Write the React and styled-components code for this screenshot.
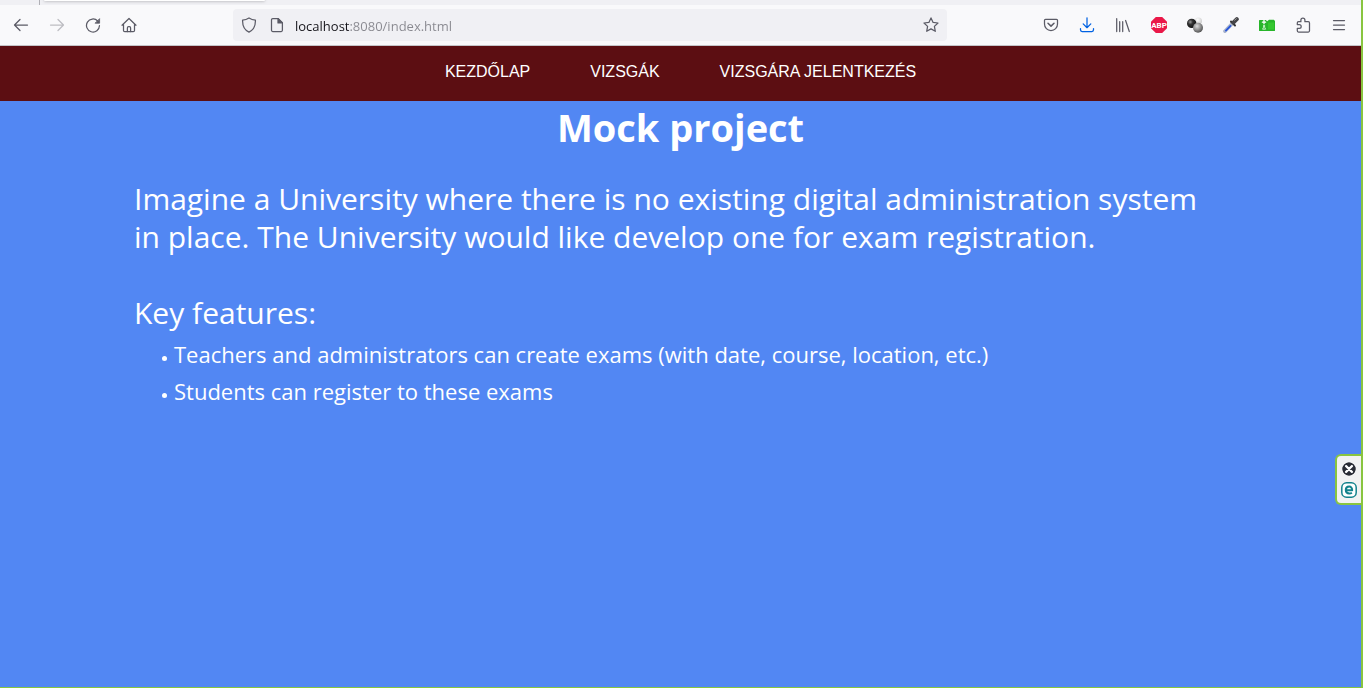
import React from "react";
import styled, { createGlobalStyle } from "styled-components";

const GlobalStyle = createGlobalStyle`
  *, *::before, *::after { box-sizing: border-box; }
  html, body { margin: 0; padding: 0; }
  body { background: #5287f3; }
`;

const uiFont = `"Segoe UI", "Open Sans", "Noto Sans", sans-serif`;

const Window = styled.div`
  position: relative;
  display: flex;
  flex-direction: column;
  min-height: 100vh;
  border-right: 2px solid #89c540;
  border-bottom: 1px solid #89c540;
  background: #5287f3;
  color: #ffffff;
  font-family: ${uiFont};
`;

const TabStrip = styled.div`
  display: flex;
  gap: 4px;
  height: 5px;
  padding-left: 39px;
  overflow: hidden;
  background: #f0f0f4;
`;

const TabSeparator = styled.span`
  width: 1px;
  background: #b0b0b6;
`;

const ActiveTab = styled.div`
  width: 221px;
  height: 1px;
  border-radius: 0 0 4px 4px;
  background: #ffffff;
  box-shadow: 0 0 3px rgba(0, 0, 0, 0.55);
`;

const Toolbar = styled.div`
  display: flex;
  align-items: center;
  height: 41px;
  padding: 0 6px 0 5px;
  background: #f9f9fb;
  border-bottom: 1px solid #c4c4c8;
`;

const ButtonGroup = styled.div`
  display: flex;
  gap: 4px;
`;

const IconButton = styled.button`
  display: flex;
  align-items: center;
  justify-content: center;
  width: ${(p) => (p.$narrow ? 28 : 32)}px;
  height: 32px;
  padding: 0;
  border: 0;
  border-radius: 4px;
  background: none;
  color: ${(p) => p.$color || "#5b5b66"};
`;

const AddressBar = styled.form`
  display: flex;
  flex: 1;
  align-items: center;
  min-width: 0;
  height: 32px;
  margin: 0 88px;
  padding: 0 2px;
  border-radius: 4px;
  background: #f0f0f4;
`;

const AddressInput = styled.input`
  flex: 1;
  min-width: 0;
  height: 32px;
  margin-left: 4px;
  padding: 2px 0 0;
  border: 0;
  outline: 0;
  background: linear-gradient(to right, #15141a 55px, #88888f 55px);
  -webkit-background-clip: text;
  background-clip: text;
  color: transparent;
  font-family: ${uiFont};
  font-size: 13px;
`;

const SiteNav = styled.nav`
  display: flex;
  justify-content: center;
  gap: 60px;
  height: 55px;
  padding-top: 16px;
  background: #5c0e12;
`;

const NavLink = styled.a`
  color: #ffffff;
  font-family: "Liberation Sans", Arial, sans-serif;
  font-size: 16px;
  line-height: 19px;
  text-decoration: none;
`;

const Content = styled.main`
  flex: 1;
  padding: 0 134px;
`;

const Title = styled.h1`
  margin: 0;
  font-size: 38px;
  line-height: 52px;
  text-align: center;
`;

const Intro = styled.p`
  margin: 27px 0 38px;
  padding-right: 8px;
  font-size: 30px;
  line-height: 38px;
`;

const SectionTitle = styled.h2`
  margin: 0;
  font-size: 30px;
  font-weight: 400;
  line-height: 38px;
`;

const FeatureList = styled.ul`
  margin: 4px 0 0;
  padding: 0 0 0 40px;
  list-style: none;
`;

const Feature = styled.li`
  display: flex;
  align-items: center;
  gap: 7px;
  margin-left: -12px;
  font-size: 22px;
  line-height: 37px;

  &::before {
    content: "";
    width: 5px;
    height: 5px;
    margin-top: 8px;
    border-radius: 50%;
    background: #ffffff;
  }
`;

const SidePanel = styled.aside`
  position: absolute;
  top: 454px;
  right: 0;
  display: flex;
  flex-direction: column;
  align-items: center;
  gap: 4px;
  width: 26px;
  padding: 5px 0 4px;
  border: 2px solid #89c540;
  border-right: 0;
  border-radius: 6px 0 0 6px;
  background: #f2f2f2;
`;

const PanelButton = styled.button`
  display: flex;
  width: 16px;
  height: 17px;
  padding: 0;
  border: 0;
  background: none;
`;

function Icon({ children, size = 16 }) {
  return (
    <svg
      width={size}
      height={size}
      viewBox="0 0 16 16"
      fill="none"
      stroke="currentColor"
      strokeWidth="1.25"
      strokeLinecap="round"
      strokeLinejoin="round"
      aria-hidden="true"
    >
      {children}
    </svg>
  );
}

const BackIcon = () => (
  <Icon><path d="M14.5 8H1.7M7 2.5 1.5 8 7 13.5" /></Icon>
);
const ForwardIcon = () => (
  <Icon><path d="M1.5 8h12.8M9 2.5 14.5 8 9 13.5" /></Icon>
);
const ReloadIcon = () => (
  <Icon>
    <path d="M12.7 4A6.5 6.5 0 1 0 14.5 8.6" />
    <path d="M14.6 2v4.2h-4.2z" fill="currentColor" strokeWidth="0.8" />
  </Icon>
);
const HomeIcon = () => (
  <Icon>
    <path d="M1 8.2 8 1.5l7 6.7M2.5 7v6.5c0 .7.5 1.2 1.2 1.2h8.6c.7 0 1.2-.5 1.2-1.2V7" />
    <path d="M6.4 14.5V11c0-.8.5-1.3 1.1-1.3h1c.6 0 1.1.5 1.1 1.3v3.5" />
  </Icon>
);
const ShieldIcon = () => (
  <Icon><path d="M8 .9c2 1.3 4.2 2 6.4 2.2.2 4.8-.8 9.4-6.4 12-5.6-2.6-6.6-7.2-6.4-12C3.8 2.9 6 2.2 8 .9z" /></Icon>
);
const PageIcon = () => (
  <Icon>
    <path d="M3.7 1.6h5.6l4.1 4.1v7.6c0 .7-.5 1.2-1.2 1.2H3.7c-.7 0-1.2-.5-1.2-1.2V2.8c0-.7.5-1.2 1.2-1.2z" />
    <path d="M9 1.6v4.3h4.3z" fill="currentColor" />
  </Icon>
);
const StarIcon = () => (
  <Icon><path d="m8 .9 2.1 4.5 4.9.6-3.6 3.4.9 4.9L8 11.9l-4.300 2.400.9-4.900L1 6l4.900-.6z" /></Icon>
);
const PocketIcon = () => (
  <Icon>
    <path d="M2.500 2.300h11c.6 0 1 .4 1 1V7c0 3.700-2.800 6.500-6.500 6.500S1.500 10.700 1.500 7V3.300c0-.6.4-1 1-1z" />
    <path d="m5 6.200 3 2.900 3-2.900" strokeWidth="1.5" />
  </Icon>
);
const DownloadIcon = () => (
  <Icon><path d="M8 .8v9.700M4.200 6.900 8 10.700l3.800-3.800M1.500 11.600v1.200c0 1 .6 1.700 1.600 1.700h9.800c1 0 1.600-.7 1.600-1.700v-1.200" /></Icon>
);
const LibraryIcon = () => (
  <Icon><path d="M1.700 1.700v12.800M4.700 4.700v9.800M7.700 4.700v9.800M10.600 3.500l3.700 11" /></Icon>
);
const BlockerIcon = () => (
  <Icon>
    <path d="M4.800 0h6.400L16 4.700v6.600L11.200 16H4.800L0 11.300V4.700z" fill="#ea1848" stroke="none" />
    <text x="8" y="10.800" fill="#fff" stroke="none" fontSize="8" fontWeight="700" fontFamily="Roboto, sans-serif" textAnchor="middle">ABP</text>
  </Icon>
);
const SpheresIcon = () => (
  <Icon>
    <defs>
      <radialGradient id="sphereDark" cx=".35" cy=".35" r=".65">
        <stop offset="0" stopColor="#999" /><stop offset=".4" stopColor="#333" /><stop offset="1" stopColor="#111" />
      </radialGradient>
      <radialGradient id="sphereGrey" cx=".4" cy=".35" r=".65">
        <stop offset="0" stopColor="#ddd" /><stop offset="1" stopColor="#555" />
      </radialGradient>
      <radialGradient id="sphereLight" cx=".4" cy=".35" r=".65">
        <stop offset="0" stopColor="#fff" /><stop offset="1" stopColor="#ccc" />
      </radialGradient>
    </defs>
    <g stroke="none">
      <circle cx="11.400" cy="4" r="3.600" fill="url(#sphereLight)" />
      <circle cx="4.700" cy="6.400" r="4.700" fill="url(#sphereDark)" />
      <circle cx="11" cy="10.700" r="5" fill="url(#sphereGrey)" />
    </g>
  </Icon>
);
const EyedropperIcon = () => (
  <Icon>
    <path d="m1.900 14.200 7.200-7.400" stroke="#a9b4cc" strokeWidth="3.400" />
    <path d="m2.900 13.600 4.600-4.800" stroke="#2755dc" strokeWidth="1.700" />
    <path d="m8 4.500 4 4" stroke="#333" strokeWidth="2" />
    <path d="m10.600 5.400 3.200-3.200" stroke="#454548" strokeWidth="4" />
    <path d="m11.600 3.200 1.800-1.500" stroke="#999" strokeWidth="1" />
  </Icon>
);
const GreenFolderIcon = () => (
  <Icon>
    <path d="M.6 3h6.200l1.400 1.200L10 2.700h4.800L16 4v9.400c0 .4-.3.600-.6.600H.6c-.3 0-.6-.3-.6-.6V3.600C0 3.200.3 3 .6 3z" fill="#28b52a" stroke="none" />
    <path d="M9 5.500h6v7H9z" fill="#35c72f" stroke="none" />
    <path d="M5 3.200v3.600M3.400 5.200h3.200" stroke="#fff" strokeWidth="1.300" />
    <path d="M4.500 8.700h1.200M4.600 9v1.200l-1 2h3l-1-2V9" stroke="#d9f5d9" strokeWidth=".9" />
  </Icon>
);
const PuzzleIcon = () => (
  <Icon><path d="M5.900 4.700V3.100a2 2 0 0 1 4 0v1.600h3.400c.7 0 1.200.5 1.200 1.200v7.900c0 .8-.5 1.200-1.200 1.200H3.500c-.7 0-1.200-.4-1.200-1.200v-2.500h2a1.900 1.900 0 0 0 0-3.800h-2V5.900c0-.7.5-1.200 1.200-1.200z" /></Icon>
);
const MenuIcon = () => (
  <Icon><path d="M2.500 3.500h11M2.500 8h11M2.500 12.500h11" /></Icon>
);
const CloseIcon = () => (
  <Icon>
    <circle cx="8" cy="8" r="6.500" fill="#2b2d36" stroke="none" />
    <path d="m5 5 6 6M11 5l-6 6" stroke="#fff" strokeWidth="2.400" />
    <circle cx="8" cy="8" r="5.900" stroke="#2b2d36" />
  </Icon>
);
const EdgeBadgeIcon = () => (
  <Icon>
    <rect x=".8" y=".8" width="14.400" height="14.400" rx="4.800" fill="#fff" stroke="#13828c" strokeWidth="1.500" />
    <path d="M5 8.200h6.200c0-2.100-1.200-3.600-3.100-3.600S4.800 6.100 4.800 8.100s1.400 3.400 3.500 3.400c1.100 0 1.900-.3 2.600-.8" stroke="#13828c" strokeWidth="2" strokeLinecap="butt" />
  </Icon>
);

const navigationTools = [
  { label: "Back", icon: BackIcon },
  { label: "Forward", icon: ForwardIcon, color: "#bdbdc2" },
  { label: "Reload", icon: ReloadIcon },
  { label: "Home", icon: HomeIcon },
];

const browserTools = [
  { label: "Save to Pocket", icon: PocketIcon },
  { label: "Downloads", icon: DownloadIcon, color: "#0062e3" },
  { label: "Library", icon: LibraryIcon },
  { label: "Adblock Plus", icon: BlockerIcon },
  { label: "Color spheres", icon: SpheresIcon },
  { label: "Color picker", icon: EyedropperIcon },
  { label: "Saved folder", icon: GreenFolderIcon },
  { label: "Extensions", icon: PuzzleIcon },
  { label: "Menu", icon: MenuIcon },
];

const links = ["KEZDŐLAP", "VIZSGÁK", "VIZSGÁRA JELENTKEZÉS"];

const features = [
  "Teachers and administrators can create exams (with date, course, location, etc.)",
  "Students can register to these exams",
];

function Tools({ items }) {
  return (
    <ButtonGroup>
      {items.map(({ label, icon: Glyph, color }) => (
        <IconButton key={label} type="button" aria-label={label} $color={color}>
          <Glyph />
        </IconButton>
      ))}
    </ButtonGroup>
  );
}

export default function App() {
  return (
    <>
      <GlobalStyle />
      <Window>
        <TabStrip>
          <TabSeparator />
          <ActiveTab />
        </TabStrip>
        <Toolbar>
          <Tools items={navigationTools} />
          <AddressBar onSubmit={(e) => e.preventDefault()}>
            <IconButton type="button" $narrow aria-label="Tracking protection"><ShieldIcon /></IconButton>
            <IconButton type="button" $narrow aria-label="Site information"><PageIcon /></IconButton>
            <AddressInput aria-label="Address" defaultValue="localhost:8080/index.html" spellCheck={false} />
            <IconButton type="button" $narrow aria-label="Bookmark this page"><StarIcon /></IconButton>
          </AddressBar>
          <Tools items={browserTools} />
        </Toolbar>
        <SiteNav>
          {links.map((text) => (
            <NavLink key={text} href="#">{text}</NavLink>
          ))}
        </SiteNav>
        <Content>
          <Title>Mock project</Title>
          <Intro>
            Imagine a University where there is no existing digital administration system in place. The
            University would like develop one for exam registration.
          </Intro>
          <SectionTitle>Key features:</SectionTitle>
          <FeatureList>
            {features.map((text) => (
              <Feature key={text}>{text}</Feature>
            ))}
          </FeatureList>
        </Content>
        <SidePanel>
          <PanelButton type="button" aria-label="Close panel"><CloseIcon /></PanelButton>
          <PanelButton type="button" aria-label="Open panel"><EdgeBadgeIcon /></PanelButton>
        </SidePanel>
      </Window>
    </>
  );
}
